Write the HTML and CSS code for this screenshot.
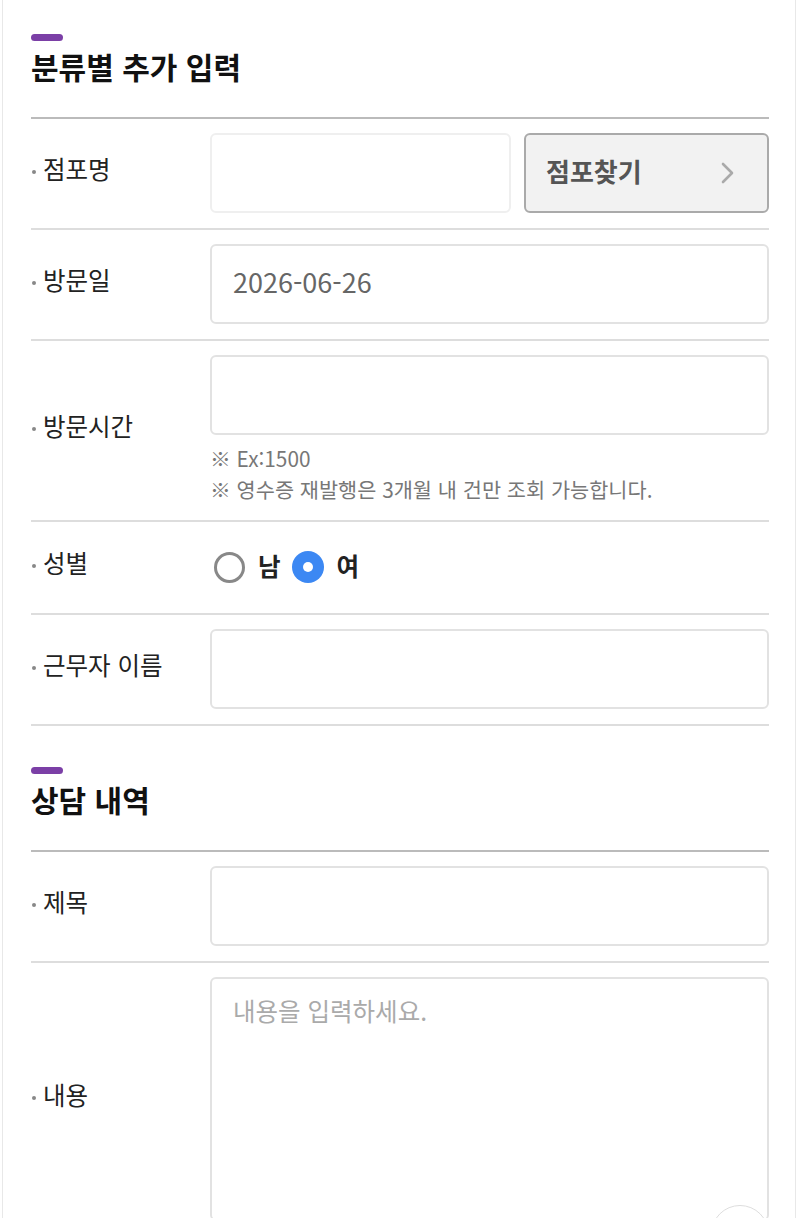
FILE: index.html
```html
<!DOCTYPE html>
<html lang="ko">
<head>
<meta charset="utf-8">
<title>분류별 추가 입력</title>
<link rel="stylesheet" href="styles.css">
</head>
<body>
<div class="page">
  <section class="section">
    <div class="section-head">
      <span class="accent"></span>
      <h2 class="section-title">분류별 추가 입력</h2>
    </div>
    <div class="row">
      <div class="label">점포명</div>
      <div class="field field-split">
        <div class="input input-readonly"></div>
        <button class="btn-find" type="button">
          <span class="btn-text">점포찾기</span>
          <svg class="chev" width="14" height="22" viewBox="0 0 14 22"><polyline points="2,2 11,11 2,20" fill="none" stroke="#aaa" stroke-width="2.6" stroke-linecap="round" stroke-linejoin="round"/></svg>
        </button>
      </div>
    </div>
    <div class="row">
      <div class="label">방문일</div>
      <div class="field">
        <div class="input input-date">2026-06-26</div>
      </div>
    </div>
    <div class="row">
      <div class="label">방문시간</div>
      <div class="field">
        <div class="input"></div>
        <div class="notes">
          <p>※ Ex:1500</p>
          <p>※ 영수증 재발행은 3개월 내 건만 조회 가능합니다.</p>
        </div>
      </div>
    </div>
    <div class="row">
      <div class="label">성별</div>
      <div class="field radios">
        <span class="radio"></span><span class="radio-text">남</span>
        <span class="radio radio-on"></span><span class="radio-text">여</span>
      </div>
    </div>
    <div class="row">
      <div class="label">근무자 이름</div>
      <div class="field">
        <div class="input"></div>
      </div>
    </div>
  </section>

  <section class="section section-second">
    <div class="section-head">
      <span class="accent"></span>
      <h2 class="section-title">상담 내역</h2>
    </div>
    <div class="row">
      <div class="label">제목</div>
      <div class="field">
        <div class="input"></div>
      </div>
    </div>
    <div class="row">
      <div class="label">내용</div>
      <div class="field">
        <div class="textarea">내용을 입력하세요.</div>
      </div>
    </div>
  </section>
</div>
<div class="fab"></div>
</body>
</html>
```
FILE: styles.css
```css
* { box-sizing: border-box; }
html, body { margin: 0; padding: 0; background: #fff; }
body {
  font-family: "Noto Sans CJK KR", "Noto Sans", sans-serif;
  color: #222;
  overflow: hidden;
}
.page {
  margin: 0 4px 0 2px;
  border-left: 1px solid #e8e8e8;
  border-right: 1px solid #e8e8e8;
  min-height: 1218px;
  padding: 0 26px 0 28px;
}
.section { padding-top: 34px; }
.section-second { padding-top: 41px; }
.section-head {
  border-bottom: 2px solid #bbb;
  padding-bottom: 31px;
}
.accent {
  display: block;
  width: 32px;
  height: 7px;
  border-radius: 4px;
  background: #7b3fa6;
}
.section-title {
  margin: 6px 0 0;
  font-size: 30px;
  line-height: 39px;
  font-weight: 700;
  color: #111;
}
.row {
  display: grid;
  grid-template-columns: 179px 1fr;
  align-items: center;
  padding: 14px 0 15px;
  border-bottom: 2px solid #ddd;
}
.label {
  position: relative;
  padding: 0 0 8px 12px;
  font-size: 24.5px;
  line-height: 32px;
  color: #222;
}
.label::before {
  content: "";
  position: absolute;
  left: 1px;
  top: 17px;
  width: 4px;
  height: 4px;
  border-radius: 50%;
  background: #888;
}
.field-split {
  display: flex;
  gap: 13px;
}
.field-split .input { flex: 0 0 301px; }
.input {
  height: 80px;
  border: 2px solid #e2e2e2;
  border-radius: 6px;
  background: #fff;
}
.input-readonly { border-color: #efefef; }
.input-date {
  display: flex;
  align-items: center;
  padding: 0 0 5px 21px;
  font-size: 27px;
  color: #666;
}
.btn-find {
  flex: 1;
  height: 80px;
  display: flex;
  align-items: center;
  justify-content: space-between;
  padding: 0 32px 0 20px;
  border: 2px solid #aaa;
  border-radius: 6px;
  background: #f2f2f2;
  font-family: inherit;
  font-size: 26px;
  font-weight: 700;
  color: #555;
}
.btn-text { padding-bottom: 5px; }
.notes { margin-top: 8px; }
.notes p {
  margin: 0;
  font-size: 20.8px;
  line-height: 31px;
  color: #777;
}
.radios {
  height: 62px;
  display: flex;
  align-items: center;
  padding-left: 4px;
}
.radio {
  width: 31px;
  height: 31px;
  border-radius: 50%;
  border: 3px solid #888;
  background: #fff;
  position: relative;
}
.radio-on {
  width: 32px;
  height: 32px;
  border: none;
  background: #3c88f3;
}
.radio-on::after {
  content: "";
  position: absolute;
  left: 11px;
  top: 11px;
  width: 10px;
  height: 10px;
  border-radius: 50%;
  background: #fff;
}
.radio-text {
  margin: 0 11px 4px 13px;
  font-size: 24.5px;
  font-weight: 700;
  color: #222;
}
.textarea {
  height: 244px;
  border: 2px solid #e2e2e2;
  border-radius: 6px;
  padding: 14px 21px;
  font-size: 24.5px;
  line-height: 36px;
  color: #aaa;
}
.fab {
  position: fixed;
  left: 711px;
  top: 1205px;
  width: 58px;
  height: 58px;
  border-radius: 50%;
  border: 1px solid #ddd;
  background: #fff;
}
```
